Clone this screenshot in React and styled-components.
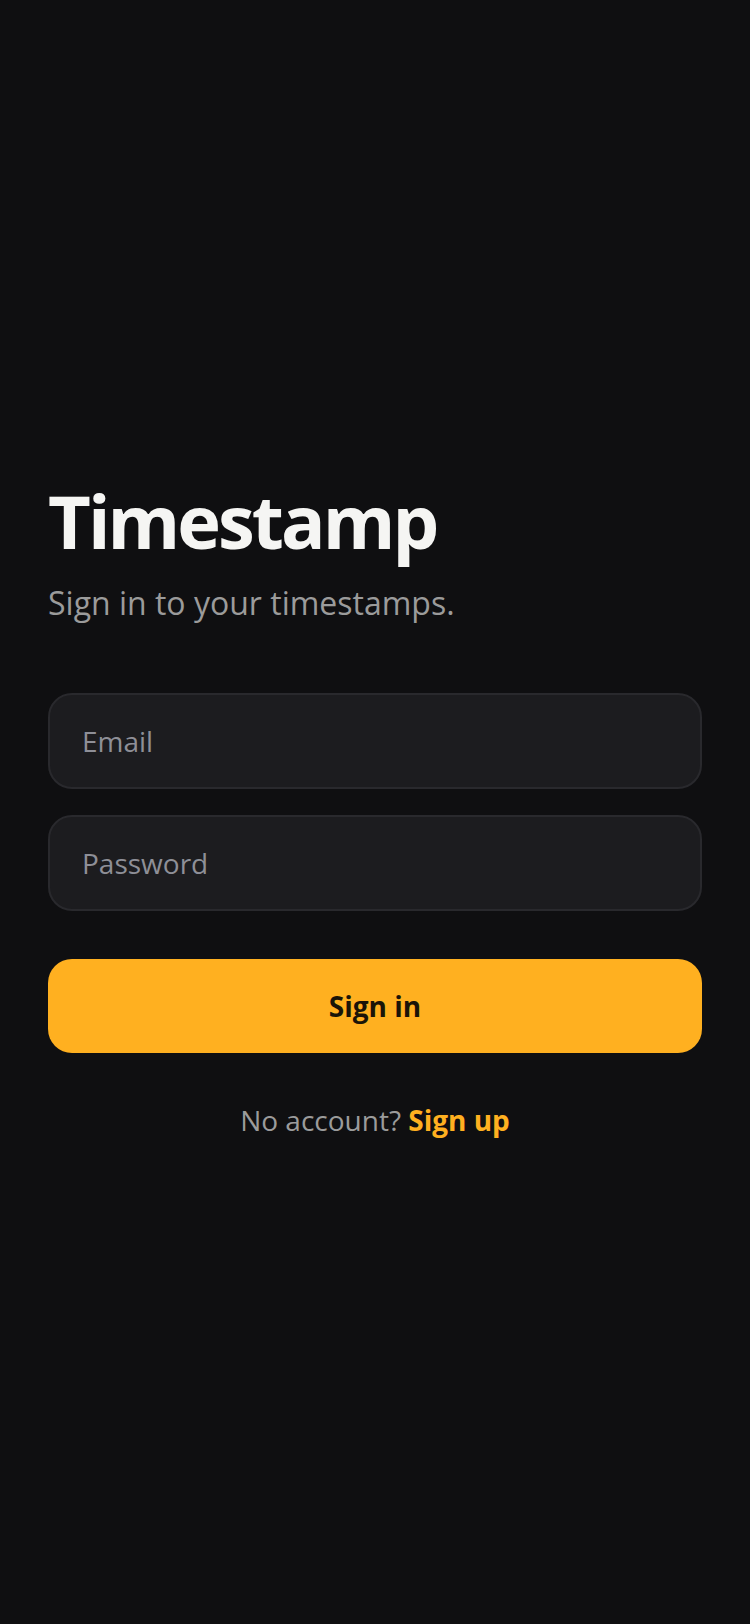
import styled, { createGlobalStyle } from "styled-components";

const GlobalStyle = createGlobalStyle`
  * {
    box-sizing: border-box;
  }
  body {
    margin: 0;
    background: #0f0f11;
    font-family: "Open Sans", "Noto Sans", sans-serif;
  }
`;

const Page = styled.div`
  min-height: 100vh;
  display: flex;
  flex-direction: column;
  justify-content: center;
  padding: 0 48px 8px;
`;

const Title = styled.h1`
  margin: 0;
  font-size: 74px;
  font-weight: 700;
  line-height: 1.2;
  letter-spacing: -0.04em;
  color: #f5f5f3;
`;

const Subtitle = styled.p`
  margin: 16px 0 0;
  font-size: 32px;
  line-height: 1.3;
  color: #9b9b9b;
`;

const Form = styled.form`
  display: flex;
  flex-direction: column;
  gap: 26px;
  margin-top: 70px;
`;

const Input = styled.input`
  height: 96px;
  padding: 0 32px;
  border: 2px solid #29292d;
  border-radius: 24px;
  background: #1c1c1f;
  color: #f5f5f3;
  font-family: "Open Sans", sans-serif;
  font-size: 28px;
  outline: none;

  &::placeholder {
    color: #8e8f97;
  }
`;

const Button = styled.button`
  height: 94px;
  margin-top: 22px;
  border: none;
  border-radius: 24px;
  background: #ffb020;
  color: #1a1408;
  font-family: "Open Sans", sans-serif;
  font-size: 28px;
  font-weight: 700;
`;

const Footer = styled.p`
  margin: 48px 0 0;
  text-align: center;
  font-size: 28px;
  color: #9b9b9b;
`;

const FooterLink = styled.a`
  color: #ffb020;
  font-weight: 700;
  text-decoration: none;
`;

const App = () => (
  <>
    <GlobalStyle />
    <Page>
      <Title>Timestamp</Title>
      <Subtitle>Sign in to your timestamps.</Subtitle>
      <Form onSubmit={(e) => e.preventDefault()}>
        <Input type="email" placeholder="Email" />
        <Input type="password" placeholder="Password" />
        <Button type="submit">Sign in</Button>
      </Form>
      <Footer>
        No account? <FooterLink href="#">Sign up</FooterLink>
      </Footer>
    </Page>
  </>
);

export default App;
